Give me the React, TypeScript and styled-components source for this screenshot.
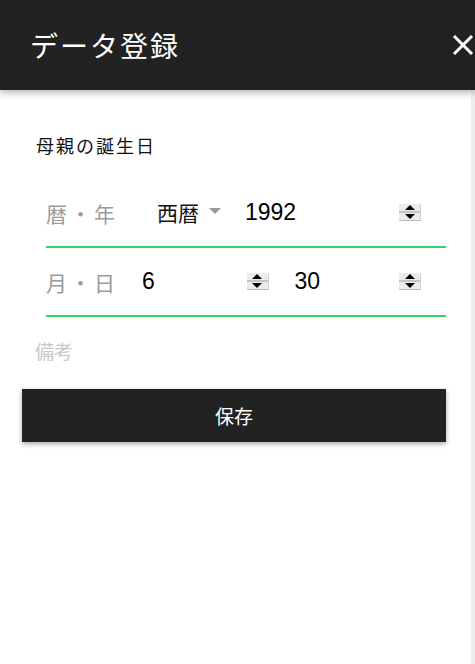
import React from 'react';
import styled, { createGlobalStyle } from 'styled-components';

const GlobalStyle = createGlobalStyle`
  html, body {
    margin: 0;
    padding: 0;
    background: #fff;
  }
  body {
    font-family: "Noto Sans CJK JP", "Noto Sans", sans-serif;
  }
`;

const Page = styled.div`
  display: flex;
  flex-direction: column;
  width: 475px;
  height: 664px;
  overflow: hidden;
`;

const Header = styled.header`
  position: relative;
  z-index: 2;
  display: flex;
  align-items: center;
  justify-content: space-between;
  height: 90px;
  padding: 0 1px 0 30px;
  box-sizing: border-box;
  background: #222222;
  box-shadow: 0 2px 8px rgba(0, 0, 0, 0.35);
`;

const Title = styled.h1`
  margin: 0;
  color: #fff;
  font-size: 28px;
  font-weight: 400;
  letter-spacing: 2px;
  line-height: 1;
`;

const CloseButton = styled.button`
  display: flex;
  padding: 0;
  border: 0;
  background: none;
  color: #fff;
  cursor: pointer;
`;

const Body = styled.div`
  flex: 1;
  display: flex;
`;

const Main = styled.main`
  flex: 1;
  padding: 42px 25px 0 22px;
  display: flex;
  flex-direction: column;
`;

const Rail = styled.div`
  width: 4px;
  background: #eeeeee;
`;

const Heading = styled.h2`
  margin: 0 0 0 14px;
  font-size: 18px;
  font-weight: 400;
  letter-spacing: 2px;
  color: #111;
  line-height: 26px;
`;

const Fields = styled.div`
  margin: 21px 0 0 24px;
  display: flex;
  flex-direction: column;
`;

const Field = styled.div`
  display: flex;
  align-items: center;
  height: 69px;
  padding: 0 25px 0 0;
  box-sizing: border-box;
  border-bottom: 2px solid #33d35f;
`;

const Label = styled.span<{ $width: number }>`
  width: ${p => p.$width}px;
  flex: none;
  font-size: 21px;
  letter-spacing: 3px;
  color: #9a9a9a;
  white-space: nowrap;
`;

const Select = styled.div`
  width: 88px;
  flex: none;
  display: flex;
  align-items: center;
  gap: 10px;
  font-size: 21px;
  color: #111;
  margin-top: -2px;
`;

const Caret = styled.span`
  width: 0;
  height: 0;
  border-left: 6px solid transparent;
  border-right: 6px solid transparent;
  border-top: 6px solid #999;
  margin-top: -2px;
`;

const Pair = styled.div`
  flex: 1;
  display: flex;
  gap: 26px;
`;

const NumberBox = styled.div`
  flex: 1;
  display: flex;
  align-items: center;
  justify-content: space-between;
  font-family: "Liberation Sans", Arial, sans-serif;
  font-size: 23px;
  color: #000;
`;

const Spinner = styled.span`
  display: flex;
  flex-direction: column;
  width: 22px;
  height: 17px;
  box-sizing: border-box;
  background: #ebebeb;
  border-bottom: 1px solid #bdbdbd;
  border-right: 1px solid #d0d0d0;
`;

const SpinHalf = styled.span<{ $down?: boolean }>`
  flex: 1;
  display: flex;
  align-items: center;
  justify-content: center;
  border-top: ${p => (p.$down ? '2px solid #c4c4c4' : 'none')};
  &::after {
    content: '';
    width: 0;
    height: 0;
    border-left: 5px solid transparent;
    border-right: 5px solid transparent;
    ${p => (p.$down ? 'border-top: 5px solid #000;' : 'border-bottom: 5px solid #000;')}
  }
`;

const Note = styled.div`
  margin: 18px 0 0 13px;
  font-size: 19px;
  color: #c8c8c8;
  line-height: 32px;
`;

const SaveButton = styled.button`
  margin-top: 22px;
  height: 53px;
  border: 0;
  background: #222222;
  color: #fff;
  font-family: "Noto Sans CJK JP", sans-serif;
  font-size: 19px;
  box-shadow: 0 2px 5px rgba(0, 0, 0, 0.35);
  cursor: pointer;
`;

const Spin = () => (
  <Spinner>
    <SpinHalf />
    <SpinHalf $down />
  </Spinner>
);

export default function App() {
  return (
    <>
      <GlobalStyle />
      <Page>
        <Header>
          <Title>データ登録</Title>
          <CloseButton aria-label="閉じる">
            <svg width="22" height="22" viewBox="0 0 22 22">
              <path d="M2 2 L20 20 M20 2 L2 20" stroke="#fff" strokeWidth="3" fill="none" />
            </svg>
          </CloseButton>
        </Header>
        <Body>
          <Main>
            <Heading>母親の誕生日</Heading>
            <Fields>
              <Field>
                <Label $width={111}>暦・年</Label>
                <Select>
                  西暦
                  <Caret />
                </Select>
                <NumberBox>
                  1992
                  <Spin />
                </NumberBox>
              </Field>
              <Field>
                <Label $width={96}>月・日</Label>
                <Pair>
                  <NumberBox>
                    6
                    <Spin />
                  </NumberBox>
                  <NumberBox>
                    30
                    <Spin />
                  </NumberBox>
                </Pair>
              </Field>
            </Fields>
            <Note>備考</Note>
            <SaveButton>保存</SaveButton>
          </Main>
          <Rail />
        </Body>
      </Page>
    </>
  );
}
